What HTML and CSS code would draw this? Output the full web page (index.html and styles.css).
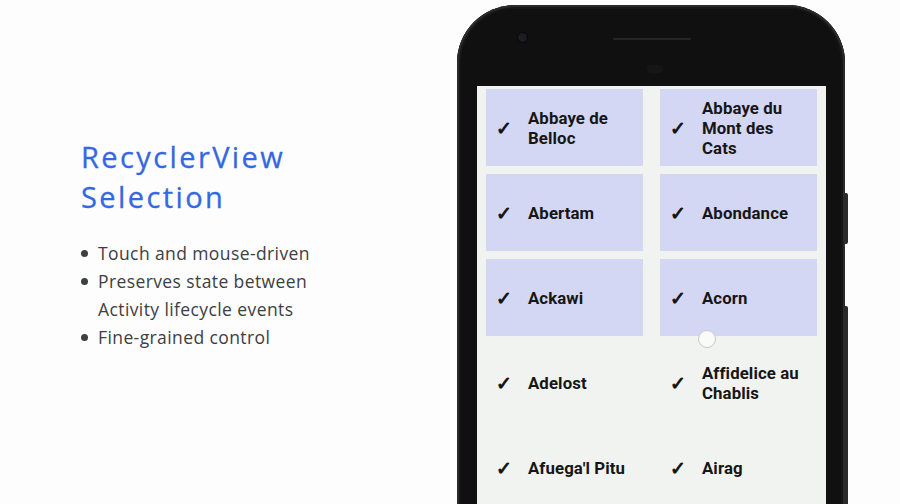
FILE: index.html
```html
<!DOCTYPE html>
<html>
<head>
<meta charset="utf-8">
<link rel="stylesheet" href="styles.css">
</head>
<body>
<div class="slide">
  <div class="text">
    <h1 class="title">RecyclerView<br>Selection</h1>
    <ul class="bullets">
      <li>Touch and mouse-driven</li>
      <li>Preserves state between Activity lifecycle events</li>
      <li>Fine-grained control</li>
    </ul>
  </div>
  <div class="phone">
    <div class="btn btn-power"></div>
    <div class="btn btn-vol"></div>
    <div class="bezel">
      <div class="camera"></div>
      <div class="speaker"></div>
      <div class="sensor"></div>
    </div>
    <div class="screen">
      <div class="grid">
        <div class="cell sel"><span class="check">✓</span><span class="name">Abbaye de Belloc</span></div>
        <div class="cell sel"><span class="check">✓</span><span class="name">Abbaye du Mont des Cats</span></div>
        <div class="cell sel"><span class="check">✓</span><span class="name">Abertam</span></div>
        <div class="cell sel"><span class="check">✓</span><span class="name">Abondance</span></div>
        <div class="cell sel"><span class="check">✓</span><span class="name">Ackawi</span></div>
        <div class="cell sel"><span class="check">✓</span><span class="name">Acorn</span></div>
        <div class="cell"><span class="check">✓</span><span class="name">Adelost</span></div>
        <div class="cell"><span class="check">✓</span><span class="name">Affidelice au Chablis</span></div>
        <div class="cell"><span class="check">✓</span><span class="name">Afuega'l Pitu</span></div>
        <div class="cell"><span class="check">✓</span><span class="name">Airag</span></div>
      </div>
      <div class="touch"></div>
    </div>
  </div>
</div>
</body>
</html>
```
FILE: styles.css
```css
html, body {
  margin: 0;
  padding: 0;
  width: 900px;
  height: 504px;
  overflow: hidden;
  background: #fdfdfd;
}
.slide {
  display: flex;
  width: 900px;
  height: 504px;
}
.text {
  width: 375px;
  padding-left: 81px;
  padding-top: 137px;
  box-sizing: border-box;
  flex: none;
}
.title {
  margin: 0;
  font-family: "Open Sans", Roboto, sans-serif;
  font-weight: 400;
  font-size: 29px;
  line-height: 40px;
  color: #3468e2;
  letter-spacing: 2.4px;
  -webkit-text-stroke: 0.3px #3468e2;
}
.bullets {
  margin: 22px 0 0 0;
  padding: 0;
  list-style: none;
  width: 250px;
  font-family: "Open Sans", Roboto, sans-serif;
  font-size: 17.5px;
  line-height: 28px;
  letter-spacing: 0.4px;
  color: #3c4043;
}
.bullets li {
  position: relative;
  padding-left: 17px;
}
.bullets li::before {
  content: "";
  position: absolute;
  left: 0;
  top: 11px;
  width: 7px;
  height: 7px;
  border-radius: 50%;
  background: #3c4043;
}
.phone {
  flex: none;
  margin-left: 82px;
  margin-top: 5px;
  width: 388px;
  height: 560px;
  background: #101010;
  border-radius: 58px 58px 0 0;
  box-shadow: inset 0 0 0 2px #2b2b2b, inset 0 0 0 4px #161616;
  position: relative;
  display: flex;
  flex-direction: column;
  align-items: center;
}
.btn {
  position: absolute;
  right: -3px;
  width: 3px;
  background: #2a2a2a;
  border-radius: 0 2px 2px 0;
}
.btn-power { top: 188px; height: 51px; }
.btn-vol { top: 301px; height: 220px; }
.bezel {
  height: 81px;
  width: 100%;
  position: relative;
  flex: none;
}
.camera {
  position: absolute;
  left: 61px;
  top: 28px;
  width: 9px;
  height: 9px;
  border-radius: 50%;
  background: #1c1c22;
  box-shadow: 0 0 0 1px #080808;
}
.speaker {
  position: absolute;
  left: 156px;
  top: 33px;
  width: 78px;
  height: 2px;
  border-radius: 2px;
  background: #262626;
}
.sensor {
  position: absolute;
  left: 190px;
  top: 60px;
  width: 16px;
  height: 8px;
  border-radius: 4px;
  background: #161616;
}
.screen {
  width: 349px;
  margin-left: 1px;
  flex: 1;
  background: #f0f3ef;
  position: relative;
  padding: 3px 9px 0 9px;
  box-sizing: border-box;
}
.grid {
  display: grid;
  grid-template-columns: 157px 157px;
  grid-auto-rows: 77px;
  column-gap: 17px;
  row-gap: 8px;
}
.cell {
  display: flex;
  align-items: center;
  font-family: Roboto, "Liberation Sans", sans-serif;
  font-weight: 700;
  font-size: 16.8px;
  line-height: 20px;
  letter-spacing: 0.1px;
  color: #161616;
}
.cell.sel {
  background: #d4d7f3;
}
.check {
  width: 42px;
  flex: none;
  padding-left: 10px;
  box-sizing: border-box;
  font-family: "DejaVu Sans", sans-serif;
  font-size: 19px;
  font-weight: 400;
  line-height: 20px;
  color: #111;
  -webkit-text-stroke: 0.9px #111;
}
.name {
  padding-right: 8px;
}
.touch {
  position: absolute;
  left: 221px;
  top: 244px;
  width: 16px;
  height: 16px;
  border-radius: 50%;
  background: #fafafa;
  border: 1px solid #c8c8cc;
}
```
